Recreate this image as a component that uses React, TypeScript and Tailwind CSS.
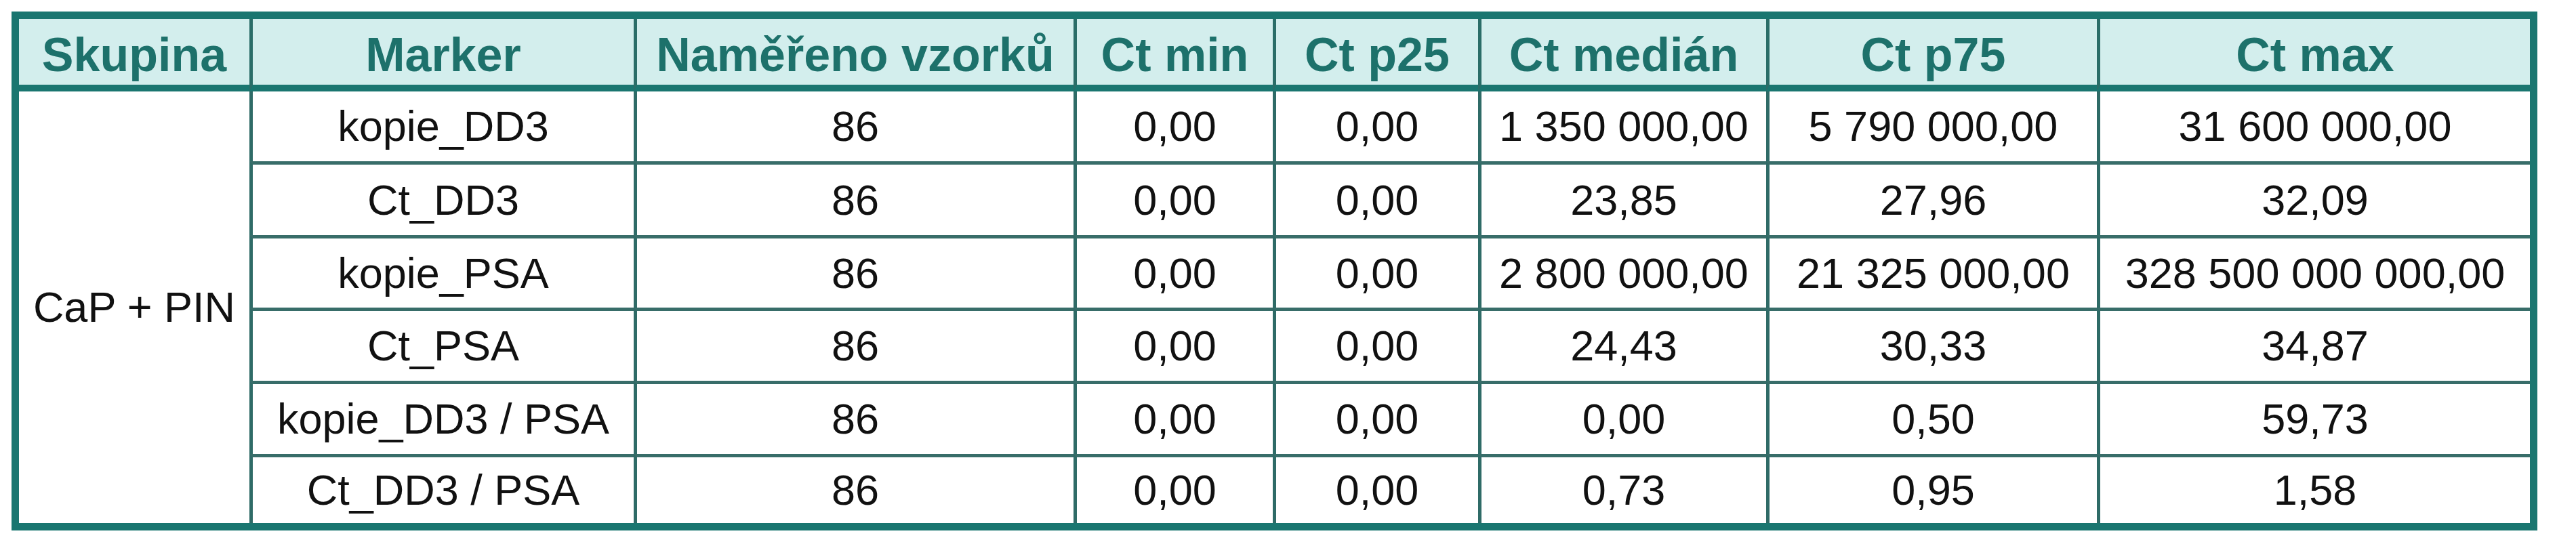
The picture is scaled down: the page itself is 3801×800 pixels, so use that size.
const headers = [
  "Skupina",
  "Marker",
  "Naměřeno vzorků",
  "Ct min",
  "Ct p25",
  "Ct medián",
  "Ct p75",
  "Ct max",
];

const rows = [
  ["kopie_DD3", "86", "0,00", "0,00", "1 350 000,00", "5 790 000,00", "31 600 000,00"],
  ["Ct_DD3", "86", "0,00", "0,00", "23,85", "27,96", "32,09"],
  ["kopie_PSA", "86", "0,00", "0,00", "2 800 000,00", "21 325 000,00", "328 500 000 000,00"],
  ["Ct_PSA", "86", "0,00", "0,00", "24,43", "30,33", "34,87"],
  ["kopie_DD3 / PSA", "86", "0,00", "0,00", "0,00", "0,50", "59,73"],
  ["Ct_DD3 / PSA", "86", "0,00", "0,00", "0,73", "0,95", "1,58"],
];

// grid row placement has to be spelled out for tailwind to pick it up
const rowStart = [
  "row-start-2",
  "row-start-3",
  "row-start-4",
  "row-start-5",
  "row-start-6",
  "row-start-7",
];

export default function App() {
  return (
    <div className="min-h-[800px] bg-white pl-[17px] pt-[17px] font-['Liberation_Sans',Arial,sans-serif]">
      <div className="w-fit border-[11px] border-[#1a7670]">
        <div className="grid grid-cols-[340px_567px_649px_294px_303px_425px_488px_639px] grid-rows-[107px_103px_109px_107px_108px_108px_102px]">
          {headers.map((h, i) => (
            <div
              key={h}
              className={
                "flex items-center justify-center whitespace-nowrap border-b-[10px] border-b-[#1a7670] bg-[#d3eeed] pt-[8px] text-[70px] font-bold leading-none text-[#1d716b]" +
                (i > 0 ? " border-l-[5px] border-l-[#2a6d68]" : "")
              }
            >
              {h}
            </div>
          ))}

          <div className="col-start-1 row-span-6 row-start-2 flex items-center justify-center text-[63px] leading-none text-[#111]">
            CaP + PIN
          </div>

          {rows.map((r, ri) =>
            r.map((v, ci) => (
              <div
                key={ri + "-" + ci}
                className={
                  "flex items-center justify-center whitespace-nowrap border-l-[5px] border-l-[#2f6b67] text-[63px] leading-none text-[#111] " +
                  rowStart[ri] +
                  (ri > 0 ? " border-t-[5px] border-t-[#386d69]" : "")
                }
              >
                {v}
              </div>
            ))
          )}
        </div>
      </div>
    </div>
  );
}
